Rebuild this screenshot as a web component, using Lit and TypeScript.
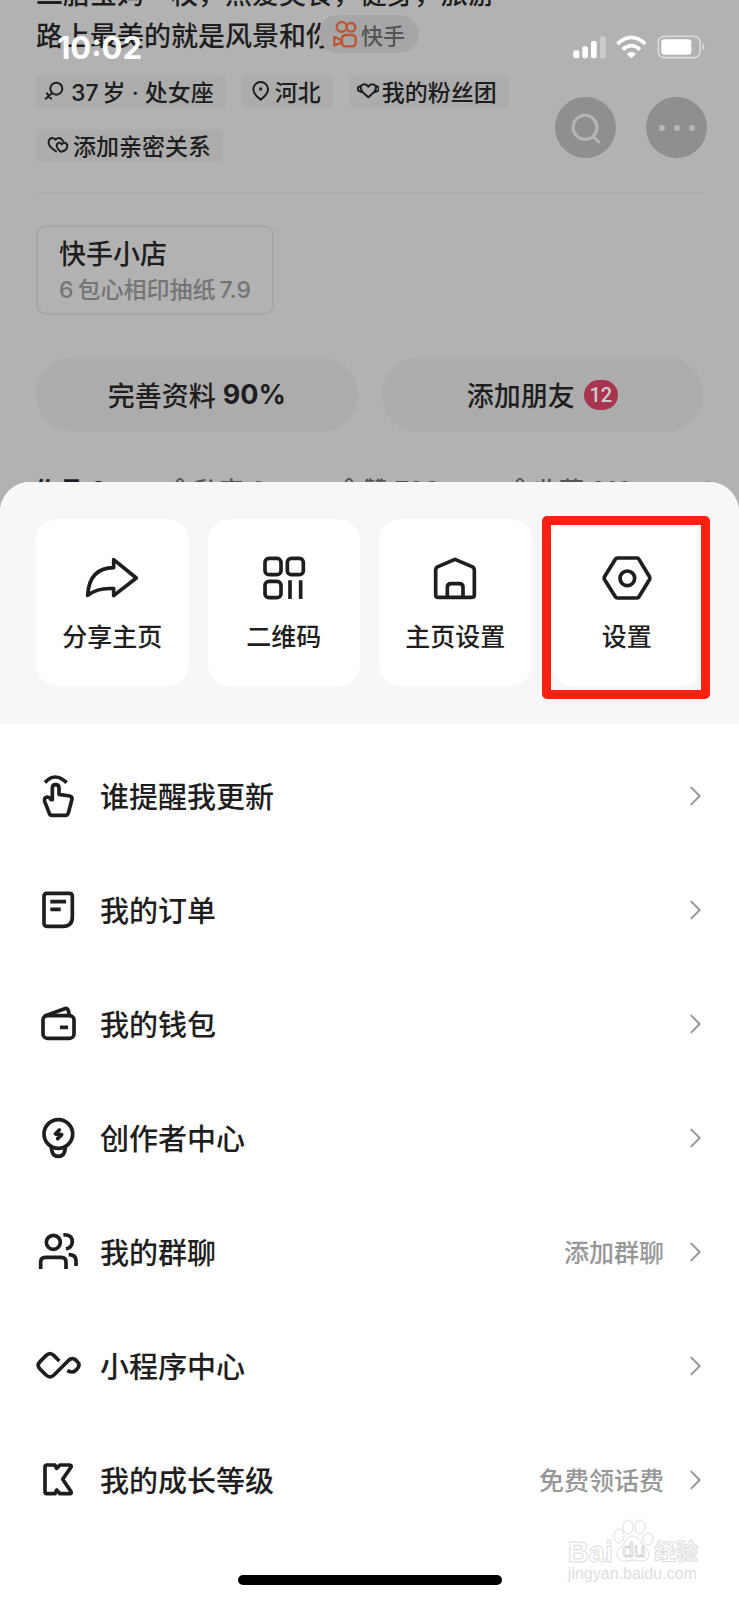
import { LitElement, html, svg, css, nothing } from "lit";
import type { TemplateResult } from "lit";
import { customElement, property } from "lit/decorators.js";

interface Entry {
  label: string;
  box: string;
  art: TemplateResult;
  note?: string;
  marked?: boolean;
}

const shortcuts: Entry[] = [
  {
    label: "分享主页",
    box: "247 144 180 180",
    art: svg`<path d="M342 179 L410 234 L342 287 V266 Q296 262 264 286 Q268 204 342 203 Z" />`,
  },
  {
    label: "二维码",
    box: "760 144 180 180",
    art: svg`<rect x="793" y="175" width="48" height="49" rx="12" /><rect x="860" y="175" width="48" height="49" rx="12" />
      <rect x="793" y="244" width="48" height="49" rx="12" /><path class="butt" d="M868 241 V297 M900 241 V297" />`,
  },
  {
    label: "主页设置",
    box: "166 144 180 180",
    art: svg`<path d="M256 178 L307 200 Q314 203 314 210 V284 Q314 292 306 292 H206 Q198 292 198 284 V210 Q198 203 205 200 Z" />
      <path d="M233 290 V262 Q233 251 244 251 H269 Q280 251 280 262 V290" />`,
  },
  {
    label: "设置",
    box: "679 144 180 180",
    marked: true,
    art: svg`<path d="M740 174 H799 Q803 174 805 178 L837 231 Q838 234 837 238 L805 290 Q803 294 799 294 H740 Q736 294 734 290 L701 238 Q700 234 701 231 L734 178 Q736 174 740 174 Z" />
      <circle cx="770" cy="235" r="22" />`,
  },
];

const entries: Entry[] = [
  {
    label: "谁提醒我更新",
    box: "103 96 144 144",
    art: svg`<path class="butt" d="M136 128 Q165 94 201 128" />
      <path d="M158 179 V144 Q158 134 168 134 Q178 134 178 144 V163 L210 168 Q218 170 217 178 L206 219 Q204 226 197 226 H157 Q151 226 149 220 L135 184 Q133 171 143 171 Q151 172 153 178 Z" />`,
  },
  {
    label: "我的订单",
    box: "103 438 144 144",
    art: svg`<path d="M142 460 H209 Q218 460 218 469 V531 Q218 559 190 559 H142 Q133 559 133 550 V469 Q133 460 142 460 Z" />
      <path class="butt" d="M152 485 H199 M152 508 H183" />`,
  },
  {
    label: "我的钱包",
    box: "103 780 144 144",
    art: svg`<rect x="130" y="827" width="93" height="68" rx="13" /><path d="M137 827 L195 806 Q203 803 206 812 L209 826" />
      <path class="butt" d="M181 862 H205" />`,
  },
  {
    label: "创作者中心",
    box: "103 72 144 144",
    art: svg`<circle cx="176" cy="132" r="43" /><path d="M155 172 Q156 199 176 199 Q196 199 197 172" />
      <path d="M179 120 L167 132 L186 134 L174 146" />`,
  },
  {
    label: "我的群聊",
    note: "添加群聊",
    box: "103 414 144 144",
    art: svg`<circle cx="161" cy="457" r="21" /><path class="butt" d="M123 537 V516 Q123 502 137 502 H185 Q199 502 199 516 V537" />
      <path class="butt" d="M191 435 Q217 433 218 455 Q217 473 199 477 M207 494 Q228 494 229 511 V528" />`,
  },
  {
    label: "小程序中心",
    box: "103 754 144 144",
    art: svg`<path class="butt" d="M179 811 L163 795 Q151 783 139 795 L121 813 Q110 824 121 835 L139 853 Q151 864 163 853 L205 811 Q214 800 226 806 L234 814 Q242 823 234 833 L227 840 Q219 848 203 840" />`,
  },
  {
    label: "我的成长等级",
    note: "免费领话费",
    box: "103 1096 144 144",
    art: svg`<path d="M142 1123 H166 L171 1133 L181 1123 H210 Q218 1124 213 1131 L189 1166 L213 1201 Q218 1209 210 1209 H181 L171 1198 L166 1209 H142 Q136 1209 136 1203 V1129 Q136 1123 142 1123 Z" />`,
  },
];

const base = css`
  :host {
    display: block;
    font-family: Inter, "Noto Sans CJK SC", sans-serif;
    font-weight: 500;
    color: #1e1e20;
  }
  * {
    box-sizing: border-box;
  }
  button {
    font: inherit;
    color: inherit;
    background: none;
    border: 0;
    margin: 0;
    padding: 0;
  }
  svg {
    display: block;
    flex: none;
  }
  svg.line {
    fill: none;
    stroke: currentColor;
    stroke-width: 11;
    stroke-linejoin: round;
    stroke-linecap: round;
  }
  .butt {
    stroke-linecap: butt;
  }
`;

@customElement("status-bar")
class StatusBar extends LitElement {
  static styles = [
    base,
    css`
      .bar {
        display: flex;
        align-items: center;
        justify-content: space-between;
        height: 94px;
        padding: 0 34px 0 57px;
        color: #fff;
      }
      .time {
        font-size: 31px;
        font-weight: 700;
      }
    `,
  ];
  render() {
    return html`<div class="bar">
      <span class="time">10:02</span>
      <svg width="132" height="24" viewBox="0 0 396 72" aria-hidden="true">
        <g fill="#fff">
          <rect x="1" y="46" width="18" height="24" rx="6" />
          <rect x="28" y="34" width="17" height="36" rx="6" />
          <rect x="54" y="18" width="17" height="52" rx="6" />
          <rect x="81" y="4" width="17" height="66" rx="6" opacity=".35" />
          <path d="M175 70 L161 57 Q175 45 189 57 Z" />
        </g>
        <g fill="none" stroke="#fff" stroke-width="11">
          <path d="M133 27 Q175 -13 217 27" />
          <path d="M149 44 Q175 20 201 44" />
        </g>
        <rect x="256" y="4" width="125" height="64" rx="17" fill="none" stroke="#fff" stroke-width="5" opacity=".5" />
        <rect x="265" y="13" width="90" height="46" rx="9" fill="#fff" />
        <path d="M388 26 Q394 28 394 36 Q394 44 388 46 Z" fill="#fff" opacity=".6" />
      </svg>
    </div>`;
  }
}

@customElement("profile-view")
class ProfileView extends LitElement {
  static styles = [
    base,
    css`
      :host {
        background: #b2b2b2;
        overflow: hidden;
        position: relative;
      }
      .body {
        padding: 0 36px;
      }
      .bio {
        margin: -26px 0 17px;
        font-size: 27px;
        line-height: 42px;
        white-space: nowrap;
      }
      .chips {
        display: flex;
        flex-wrap: wrap;
        gap: 21px 16px;
        width: 480px;
        padding-bottom: 30px;
      }
      .chip {
        display: flex;
        align-items: center;
        gap: 3px;
        height: 33px;
        padding: 0 12px 2px 8px;
        border-radius: 5px;
        background: #acacac;
        font-size: 23px;
        white-space: nowrap;
      }
      .rule {
        border: 0;
        border-top: 2px solid #acacac;
        margin: 0 0 31px;
      }
      .shop {
        display: inline-flex;
        flex-direction: column;
        align-items: flex-start;
        height: 90px;
        padding: 10px 21px 0 21px;
        border: 2px solid #a6a6a6;
        border-radius: 10px;
        text-align: left;
      }
      .shop-name {
        font-size: 27px;
        line-height: 36px;
      }
      .shop-item {
        font-size: 23px;
        line-height: 34px;
        color: #757575;
      }
      .pair {
        display: grid;
        grid-template-columns: 1fr 1fr;
        gap: 24px;
        margin: 42px 0 38px;
      }
      .pill {
        display: flex;
        align-items: center;
        justify-content: center;
        gap: 9px;
        height: 75px;
        border-radius: 38px;
        background: #acacac;
        font-size: 27px;
      }
      .tight {
        gap: 7px;
      }
      .strong {
        font-weight: 700;
      }
      .badge {
        display: grid;
        place-items: center;
        width: 34px;
        height: 30px;
        border-radius: 15px;
        background: #a93450;
        color: #ccc;
        font-family: Roboto, sans-serif;
        font-size: 20px;
      }
      .tabs {
        display: grid;
        grid-template-columns: 140px 169px 171px 1fr auto;
        align-items: center;
        height: 37px;
        margin: 0 -16px 0 -2px;
        font-size: 25px;
        color: #555;
      }
      .tab {
        display: flex;
        align-items: center;
        gap: 8px;
        white-space: nowrap;
      }
      .tab.on {
        color: #1e1e20;
        font-weight: 700;
      }
      .tag {
        position: absolute;
        top: 15px;
        left: 319px;
        display: flex;
        align-items: center;
        gap: 4px;
        height: 38px;
        padding: 0 14px 0 14px;
        border-radius: 19px;
        background: #a6a6a8;
        color: #555;
        font-size: 22px;
      }
      .tools {
        position: absolute;
        top: 97px;
        right: 32px;
        display: flex;
        gap: 30px;
      }
      .tool {
        display: grid;
        place-items: center;
        width: 61px;
        height: 61px;
        border-radius: 50%;
        background: #8f8f8f;
        color: #b5b5b5;
      }
    `,
  ];

  private lock() {
    return html`<svg class="line" width="12" height="24" viewBox="0 0 36 72" aria-hidden="true">
      <path d="M8 30 V14 Q18 -4 28 14 V30" stroke-width="6" /><rect x="4" y="30" width="28" height="26" rx="4" stroke-width="6" />
    </svg>`;
  }

  render() {
    return html`
      <div class="body">
        <p class="bio">二胎宝妈一枚，热爱美食，健身，旅游<br />路上最美的就是风景和你</p>
        <div class="chips">
          <span class="chip">
            <svg class="line" width="24" height="20" viewBox="132 246 72 60" aria-hidden="true">
              <g stroke-width="6"><circle cx="169" cy="269" r="18" /><path d="M156 283 L137 299 M141 283 L153 299" /></g>
            </svg>
            37&thinsp;岁 · 处女座
          </span>
          <span class="chip">
            <svg class="line" width="22" height="20" viewBox="741 246 66 60" aria-hidden="true">
              <g stroke-width="6"><path d="M773 302 Q751 286 751 271 A22 22 0 0 1 795 271 Q795 286 773 302 Z" /><circle cx="773" cy="270" r="2" /></g>
            </svg>
            河北
          </span>
          <span class="chip">
            <svg class="line" width="22" height="18" viewBox="163 250 66 54" aria-hidden="true">
              <g stroke-width="6"><path d="M197 296 L180 281 Q168 264 180 258 Q190 254 197 264 Q204 254 214 258 Q226 264 214 281 Z" /><path d="M174 263 Q162 264 167 276 L176 280 M220 263 Q232 264 227 276 L218 280" /></g>
            </svg>
            我的粉丝团
          </span>
          <span class="chip">
            <svg class="line" width="26" height="20" viewBox="137 408 78 60" aria-hidden="true">
              <g stroke-width="6"><path d="M173 457 Q148 442 151 426 Q158 410 172 422 Q184 410 194 426" /><path d="M187 458 Q170 444 177 434 Q183 428 190 436 Q200 426 207 438 Q208 456 187 458 Z" /></g>
            </svg>
            添加亲密关系
          </span>
        </div>
        <hr class="rule" />
        <button class="shop">
          <span class="shop-name">快手小店</span>
          <span class="shop-item">6&thinsp;包心相印抽纸&thinsp;7.9</span>
        </button>
        <div class="pair">
          <button class="pill tight">完善资料 <span class="strong">90%</span></button>
          <button class="pill">添加朋友 <span class="badge">12</span></button>
        </div>
        <nav class="tabs">
          <button class="tab on">作品 6</button>
          <button class="tab">${this.lock()}私密 2</button>
          <button class="tab">${this.lock()}赞 793</button>
          <button class="tab">${this.lock()}收藏 210</button>
          <svg class="line" width="12" height="20" viewBox="0 0 36 60" aria-hidden="true"><path d="M4 8 L28 30 L4 52" stroke-width="4" /></svg>
        </nav>
      </div>
      <div class="tag">
        <svg width="24" height="28" viewBox="99 59 72 84" fill="none" stroke="#bd5530" stroke-width="7" stroke-linejoin="round" aria-hidden="true">
          <circle cx="125" cy="80" r="15" /><circle cx="153" cy="81" r="13" />
          <rect x="126" y="104" width="41" height="34" rx="10" /><path d="M103 110 L124 119 V127 L103 135 Z" />
        </svg>
        快手
      </div>
      <div class="tools">
        <button class="tool" aria-label="搜索">
          <svg class="line" width="32" height="32" viewBox="0 0 96 96"><g stroke-width="9"><circle cx="45" cy="46" r="36" /><path d="M71 74 L86 90" /></g></svg>
        </button>
        <button class="tool" aria-label="更多">
          <svg width="38" height="8" viewBox="0 0 38 8" fill="currentColor"><circle cx="4" cy="4" r="3" /><circle cx="19" cy="4" r="3" /><circle cx="34" cy="4" r="3" /></svg>
        </button>
      </div>
    `;
  }
}

@customElement("action-sheet")
class ActionSheet extends LitElement {
  @property({ attribute: false }) shortcuts: Entry[] = shortcuts;
  @property({ attribute: false }) entries: Entry[] = entries;

  static styles = [
    base,
    css`
      :host {
        background: #fff;
        border-radius: 30px 30px 0 0;
        overflow: hidden;
      }
      .cards {
        display: grid;
        grid-template-columns: repeat(4, 1fr);
        gap: 19px;
        padding: 37px 36px 38px;
        background: #f7f7f7;
      }
      .card {
        position: relative;
        display: flex;
        flex-direction: column;
        align-items: center;
        gap: 14px;
        height: 167px;
        padding-top: 29px;
        border-radius: 22px;
        background: #fff;
        font-size: 25px;
        line-height: 30px;
      }
      .mark {
        position: absolute;
        inset: -3px -7px -13px -9px;
        border: 9px solid #fe2012;
        border-radius: 5px;
      }
      .list {
        padding-top: 15px;
      }
      .row {
        display: flex;
        align-items: center;
        width: 100%;
        height: 114px;
        padding: 0 38px 0 34px;
        text-align: left;
      }
      .label {
        flex: 1;
        padding: 0 0 3px 18px;
        font-size: 29px;
      }
      .note {
        color: #979797;
        font-size: 25px;
        padding: 0 26px 3px 0;
      }
      .chevron {
        color: #979797;
      }
      .foot {
        display: flex;
        justify-content: center;
        padding: 38px 0 15px;
      }
      .home {
        width: 264px;
        height: 10px;
        border-radius: 5px;
        background: #000;
      }
    `,
  ];

  render() {
    return html`
      <div class="cards">
        ${this.shortcuts.map(
          (s) => html`<button class="card">
            <svg class="line" width="60" height="60" viewBox=${s.box} aria-hidden="true">${s.art}</svg>
            <span>${s.label}</span>
            ${s.marked ? html`<span class="mark"></span>` : nothing}
          </button>`
        )}
      </div>
      <div class="list">
        ${this.entries.map(
          (e) => html`<button class="row">
            <svg class="line" width="48" height="48" viewBox=${e.box} aria-hidden="true">${e.art}</svg>
            <span class="label">${e.label}</span>
            ${e.note ? html`<span class="note">${e.note}</span>` : nothing}
            <svg class="line chevron" width="11" height="20" viewBox="0 0 33 60" aria-hidden="true">
              <path d="M4 5 L29 30 L4 55" stroke-width="6" />
            </svg>
          </button>`
        )}
      </div>
      <div class="foot"><div class="home"></div></div>
    `;
  }
}

@customElement("water-mark")
class WaterMark extends LitElement {
  static styles = [
    base,
    css`
      :host {
        font-family: "Liberation Sans", "Noto Sans CJK SC", sans-serif;
        font-weight: 700;
        color: #fff;
        -webkit-text-stroke: 1px #dedede;
        pointer-events: none;
      }
      .top {
        display: flex;
        align-items: flex-end;
        height: 46px;
        line-height: 24px;
      }
      .latin {
        font-size: 29px;
      }
      .han {
        font-size: 22px;
      }
      .du {
        font-size: 21px;
        font-weight: 400;
        stroke: #d4d4d4;
        stroke-width: 1px;
      }
      .site {
        font-size: 16px;
        font-weight: 400;
        line-height: 20px;
        color: #dedede;
        -webkit-text-stroke: 0;
      }
    `,
  ];
  render() {
    return html`
      <div class="top">
        <span class="latin">Bai</span>
        <svg width="41" height="46" viewBox="0 0 41 46" aria-hidden="true">
          <g fill="#fff" stroke="#dedede">
            <ellipse cx="6" cy="18" rx="5" ry="7" /><ellipse cx="15" cy="9" rx="5" ry="7" />
            <ellipse cx="27" cy="9" rx="5" ry="7" /><ellipse cx="35" cy="21" rx="5" ry="6" />
            <path d="M20 18 C27 18 28 26 33 30 C39 36 35 44 28 43 Q20 41 13 43 C4 44 1 36 7 30 C12 26 13 18 20 18 Z" />
          </g>
          <text class="du" x="9" y="39" fill="#fff">du</text>
        </svg>
        <span class="han">经验</span>
      </div>
      <div class="site">jingyan.baidu.com</div>
    `;
  }
}

@customElement("app-root")
class AppRoot extends LitElement {
  static styles = [
    base,
    css`
      :host {
        position: relative;
        background: #b2b2b2;
      }
      .status {
        position: absolute;
        inset: 0 0 auto 0;
        z-index: 2;
      }
      .sheet {
        position: relative;
        margin-top: -25px;
      }
      .stamp {
        position: absolute;
        right: 41px;
        bottom: 16px;
      }
    `,
  ];
  render() {
    return html`
      <status-bar class="status"></status-bar>
      <profile-view></profile-view>
      <action-sheet class="sheet"></action-sheet>
      <water-mark class="stamp"></water-mark>
    `;
  }
}
